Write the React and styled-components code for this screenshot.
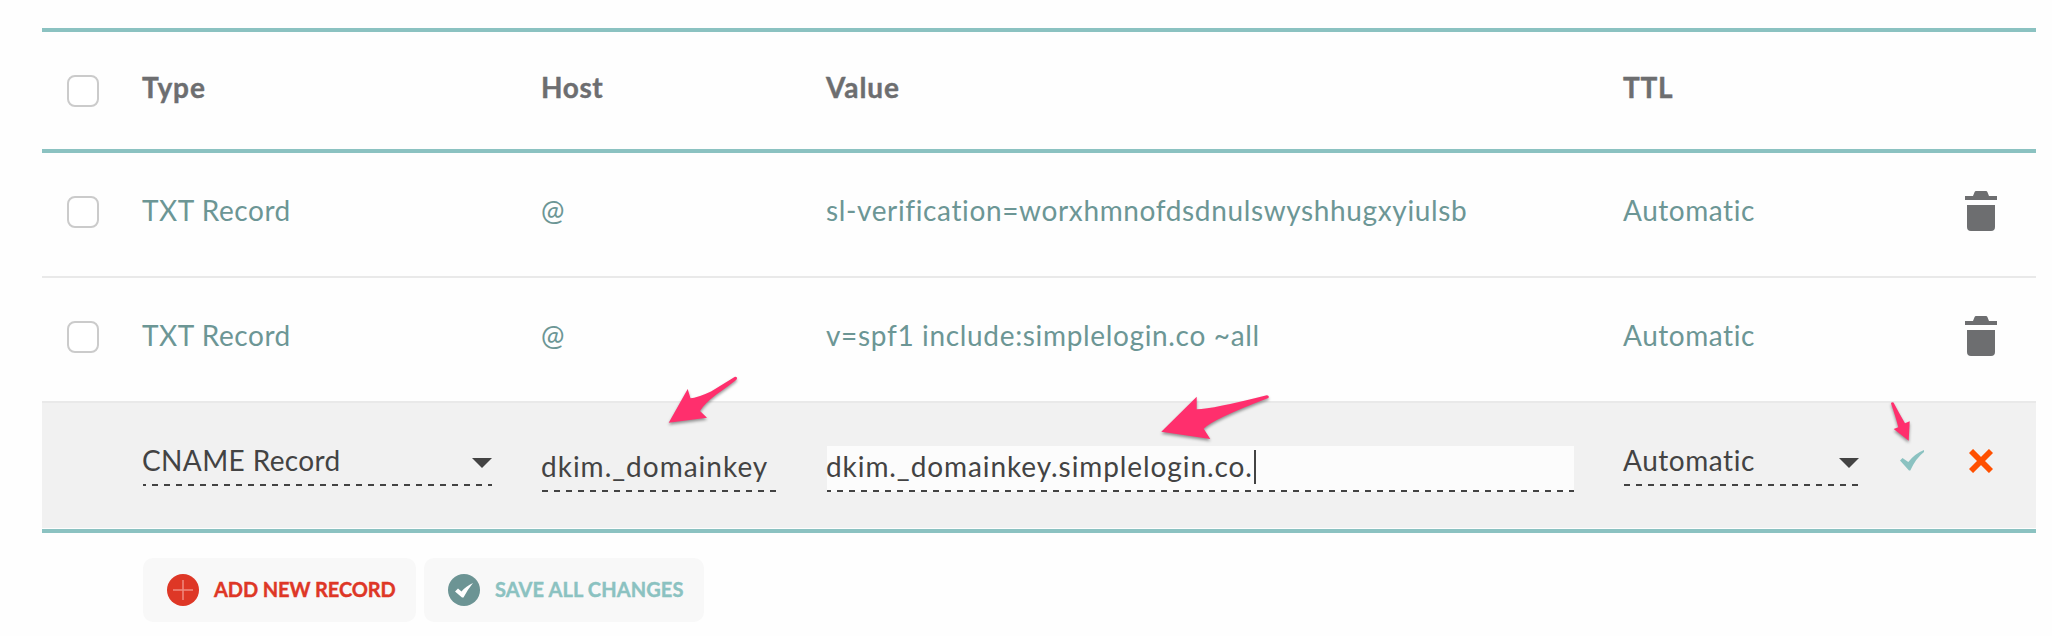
import React from "react";
import styled, { createGlobalStyle } from "styled-components";

const GlobalStyle = createGlobalStyle`
  *, *::before, *::after { box-sizing: border-box; }
  body { margin: 0; background: #fff; }
`;

const Page = styled.main`
  position: relative;
  width: 2052px;
  height: 636px;
  padding: 28px 16px 0 42px;
  overflow: hidden;
  background: #fefefe;
  font-family: Lato, "Open Sans", sans-serif;
  font-size: 28px;
  line-height: 34px;
  color: #6c9695;
`;

const Table = styled.section`
  border-top: 4px solid #8bc2c1;
  border-bottom: 4px solid #8bc2c1;
  padding-bottom: 1px;
`;

const Row = styled.div`
  display: grid;
  grid-template-columns: 76px 399px 285px 797px 276px 69px 1fr;
  align-items: start;
  height: 125px;
  padding: 39px 0 0 25px;
  border-bottom: 2px solid #e9e9e9;
`;

const HeaderRow = styled(Row)`
  height: 121px;
  padding-top: 37px;
  border-bottom: 4px solid #8bc2c1;
  color: #6d6e70;
  font-weight: 700;
  -webkit-text-stroke: 0.4px;
`;

const EditRow = styled(Row)`
  background: #f1f1f1;
  border-bottom: 0;
  color: #434343;
`;

const Checkbox = styled.span`
  width: 32px;
  height: 32px;
  margin-top: ${(p) => p.$drop || 4}px;
  border: 2px solid #cbcbcb;
  border-radius: 8px;
  background: #fff;
`;

const Text = styled.span`
  margin: 1px 0 0 -1px;
  white-space: pre;
  letter-spacing: ${(p) => p.$track ?? 0.55}px;
`;

const Field = styled.div`
  display: flex;
  align-items: flex-start;
  justify-content: space-between;
  width: ${(p) => p.$width}px;
  height: 44px;
  background: repeating-linear-gradient(90deg, #434343 0 6px, transparent 6px 12px)
    ${(p) => p.$shift || 0}px 100% / 1200px 2px repeat-x;
`;

const Input = styled(Field)`
  justify-content: flex-start;
  height: 46px;
  margin-top: 4px;
  padding-top: 2px;
  background-color: ${(p) => (p.$focused ? "#fcfcfc" : "transparent")};
`;

const Caret = styled.i`
  width: 2px;
  height: 34px;
  margin: 2px 0 0 1px;
  background: #434343;
`;

const Triangle = styled.i`
  margin-top: 16px;
  border: 10px solid transparent;
  border-top-color: #434343;
  border-bottom: 0;
`;

const RowIcon = styled.svg`
  display: block;
  margin: ${(p) => p.$top}px 0 0 ${(p) => p.$left || 0}px;
`;

const Actions = styled.div`
  display: flex;
  gap: 8px;
  padding: 25px 0 0 101px;
`;

const Button = styled.button`
  display: flex;
  align-items: center;
  width: ${(p) => p.$width}px;
  height: 64px;
  padding: 0 0 0 24px;
  border: 0;
  border-radius: 10px;
  background: #f8f8f8;
  color: ${(p) => p.$color};
  font: 700 20px/24px Lato, "Open Sans", sans-serif;
  -webkit-text-stroke: 0.4px;

  svg { flex: none; margin-right: 16px; }
`;

const ButtonLabel = styled(Text)`
  margin: 0 0 2px -1px;
`;

const Annotations = styled.svg`
  position: absolute;
  inset: 0;
  pointer-events: none;
  filter: drop-shadow(0 2px 1.5px rgba(0, 0, 0, 0.4));
`;

const TrashIcon = () => (
  <RowIcon $top={-1} $left={-4} width="32" height="40" viewBox="0 0 32 40" fill="#6d6e70">
    <path d="M0 5h8l1.6-4Q10 0 11 0h10q1 0 1.4 1L24 5h8v4H0zM2 14h28v22q0 4-4 4H6q-4 0-4-4z" />
  </RowIcon>
);

const CheckIcon = () => (
  <RowIcon $top={8} width="24" height="21" viewBox="0 0 24 21" fill="#8bc2c1">
    <path d="M0 10.5 2.5 8 8.3 12Q15 3.500 24 0v2Q16 8 10.300 20.500H9Z" />
  </RowIcon>
);

const CloseIcon = () => (
  <RowIcon $top={7} width="24" height="24" viewBox="0 0 24 24" fill="none" stroke="#ff5000" strokeWidth="5.800">
    <path d="M2 2 22 22M22 2 2 22" />
  </RowIcon>
);

const PlusBadge = () => (
  <svg width="32" height="32" viewBox="0 0 32 32">
    <circle cx="16" cy="16" r="16" fill="#de3726" />
    <path d="M6 16h20M16 6v20" stroke="#f08b80" strokeWidth="1.500" />
  </svg>
);

const CheckBadge = () => (
  <svg width="32" height="32" viewBox="0 0 32 32">
    <circle cx="16" cy="16" r="16" fill="#6c9494" />
    <path d="M7 17.500 10 14.500 13.500 17.500Q18 12 25 9 20 15 15.500 23.500H14Z" fill="#fff" />
  </svg>
);

const records = [
  { value: "sl-verification=worxhmnofdsdnulswyshhugxyiulsb", track: 0.63 },
  { value: "v=spf1 include:simplelogin.co ~all", track: 0.66 },
];

export default function App() {
  return (
    <>
      <GlobalStyle />
      <Page>
        <Table>
          <HeaderRow>
            <Checkbox $drop={6} />
            <Text $track={0.95}>Type</Text>
            <Text $track={0.6}>Host</Text>
            <Text $track={0.95}>Value</Text>
            <Text $track={0.7}>TTL</Text>
          </HeaderRow>
          {records.map((r) => (
            <Row key={r.value}>
              <Checkbox />
              <Text>TXT Record</Text>
              <Text>@</Text>
              <Text $track={r.track}>{r.value}</Text>
              <Text>Automatic</Text>
              <span />
              <TrashIcon />
            </Row>
          ))}
          <EditRow>
            <span />
            <Field $width={349} $shift={-3}>
              <Text $track={0.38}>CNAME Record</Text>
              <Triangle />
            </Field>
            <Input $width={234}>
              <Text $track={1}>dkim._domainkey</Text>
            </Input>
            <Input $width={747} $shift={-2} $focused>
              <Text $track={0.92}>dkim._domainkey.simplelogin.co.</Text>
              <Caret />
            </Input>
            <Field $width={235}>
              <Text>Automatic</Text>
              <Triangle />
            </Field>
            <CheckIcon />
            <CloseIcon />
          </EditRow>
        </Table>
        <Actions>
          <Button $width={273} $color="#de3726">
            <PlusBadge />
            <ButtonLabel $track={-0.1}>ADD NEW RECORD</ButtonLabel>
          </Button>
          <Button $width={280} $color="#8bc2c1">
            <CheckBadge />
            <ButtonLabel $track={0.1}>SAVE ALL CHANGES</ButtonLabel>
          </Button>
        </Actions>
        <Annotations width="2052" height="636" viewBox="0 0 2052 636" fill="#ff2f6d">
          <path d="M668.700 422.700 687.700 389 690.500 398.300Q697 398 711 391.500L735 376.700Q737.500 376.500 737 379 735 381.500 716.700 394.300 704 404 700 411L707 417.700Z" />
          <path d="M1161.300 431.700 1196.700 396.700V409.300Q1213 409 1266.700 395.300 1269.500 395.500 1268.500 398 1213 419 1203.700 428.700L1210.300 439Z" />
          <path d="M1891 403.500Q1891.500 401.500 1893.500 402.500 1899 413 1905 423.300L1909.700 421.300 1908.700 440.700 1893.700 429 1898.300 427.300Q1896 418 1891 403.500Z" />
        </Annotations>
      </Page>
    </>
  );
}
